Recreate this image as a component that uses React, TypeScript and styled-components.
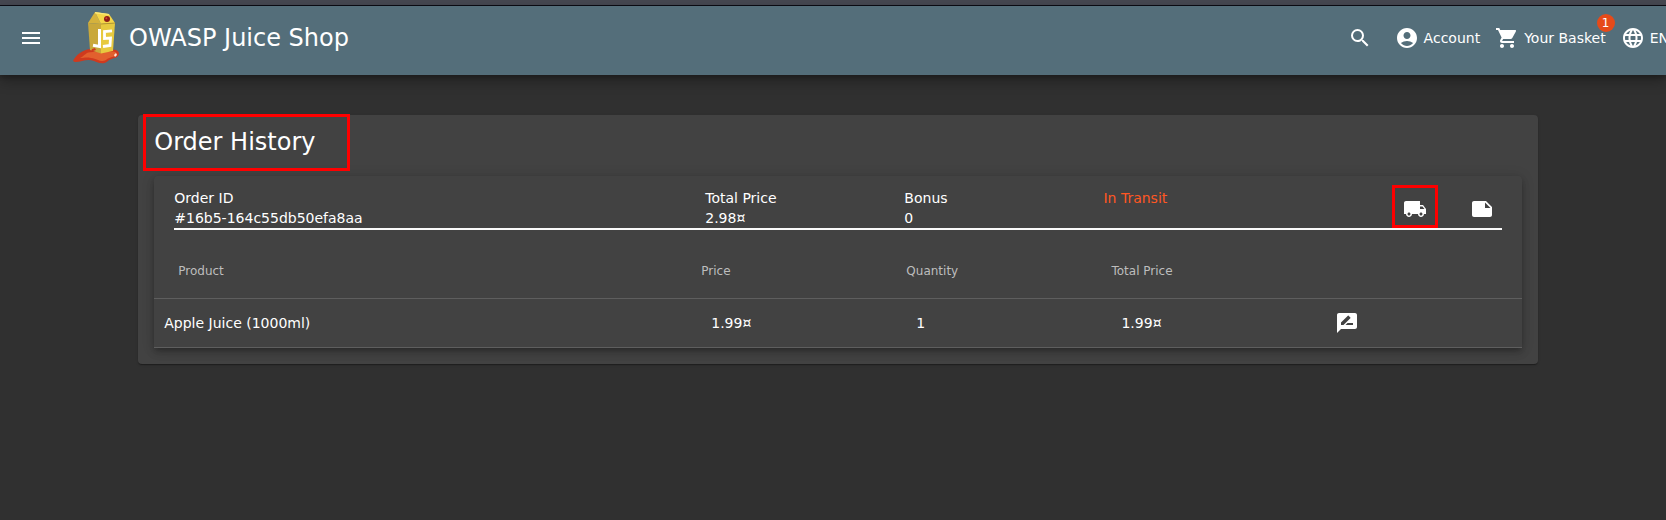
import React from "react";
import styled, { createGlobalStyle } from "styled-components";
import {
  MdMenu,
  MdSearch,
  MdAccountCircle,
  MdShoppingCart,
  MdLanguage,
  MdLocalShipping,
  MdNote,
  MdRateReview,
} from "react-icons/md";

const GlobalStyle = createGlobalStyle`
  *, *::before, *::after { box-sizing: border-box; }
  body {
    margin: 0;
    background: #303030;
    color: #fff;
    font-family: "DejaVu Sans", Verdana, sans-serif;
    font-size: 14px;
    line-height: 20px;
    overflow-x: hidden;
  }
`;

const Page = styled.div`
  min-height: 100vh;
  overflow: hidden;
`;

const WindowEdge = styled.div`
  height: 6px;
  background: #454750;
  border-bottom: 1px solid #0c0c14;
`;

const Toolbar = styled.header`
  display: flex;
  align-items: center;
  justify-content: space-between;
  height: 69px;
  padding: 0 0 6px 11px;
  background: #546e7a;
  box-shadow: 0 6px 12px rgba(0, 0, 0, 0.3), 0 2px 4px rgba(0, 0, 0, 0.2);
`;

const Brand = styled.div`
  display: flex;
  align-items: center;
`;

const IconButton = styled.button`
  display: inline-flex;
  align-items: center;
  justify-content: center;
  width: 40px;
  height: 40px;
  padding: 0;
  border: 0;
  background: none;
  color: inherit;
  cursor: pointer;
`;

const Home = styled.a`
  display: flex;
  align-items: center;
  gap: 9px;
  margin-left: 22px;
  color: inherit;
  font-size: 24px;
  line-height: 32px;
  text-decoration: none;
  white-space: nowrap;
`;

const Nav = styled.nav`
  display: flex;
  align-items: center;
  flex-shrink: 0;
  margin-right: -3px;
`;

const NavButton = styled.button`
  display: flex;
  align-items: center;
  gap: 5px;
  margin-left: 15px;
  padding: 0;
  border: 0;
  background: none;
  color: inherit;
  font: inherit;
  white-space: nowrap;
  cursor: pointer;
`;

const BasketLabel = styled.span`
  position: relative;
`;

const Badge = styled.span`
  position: absolute;
  top: -14px;
  right: -9px;
  width: 18px;
  height: 18px;
  border-radius: 50%;
  background: #e64a19;
  font-size: 12px;
  line-height: 18px;
  text-align: center;
`;

const Card = styled.main`
  width: 84%;
  margin: 40px auto 0 8.3%;
  padding: 11px 16px 16px;
  border-radius: 4px;
  background: #424242;
  box-shadow: 0 2px 1px -1px rgba(0, 0, 0, 0.2), 0 1px 1px rgba(0, 0, 0, 0.14),
    0 1px 3px rgba(0, 0, 0, 0.12);
`;

const Title = styled.h1`
  position: relative;
  width: max-content;
  margin: 0 0 18px;
  font-size: 24px;
  font-weight: 400;
  line-height: 32px;
`;

const TitleMark = styled.span`
  position: absolute;
  top: -12px;
  right: -35px;
  bottom: -13px;
  left: -11px;
  border: 3px solid #f00;
  pointer-events: none;
`;

const Order = styled.section`
  border-radius: 4px 4px 0 0;
  box-shadow: 0 3px 5px -1px rgba(0, 0, 0, 0.2), 0 5px 8px rgba(0, 0, 0, 0.14),
    0 1px 14px rgba(0, 0, 0, 0.12);
`;

const OrderHead = styled.div`
  display: grid;
  grid-template-columns: 40fr 15fr 15fr 15fr 10fr 5fr;
  margin: 0 20px;
  padding-top: 12px;
  border-bottom: 2px solid #fafafa;
`;

const Field = styled.div`
  display: flex;
  flex-direction: column;
  min-width: 0;
`;

const Status = styled.div`
  color: #ff5722;
`;

const Action = styled.div`
  display: flex;
  justify-content: flex-end;
  height: 40px;

  button {
    height: 42px;
  }
`;

const Marked = styled.div`
  position: relative;
  height: 40px;
`;

const ActionMark = styled.span`
  position: absolute;
  top: -3px;
  right: -3px;
  bottom: 0;
  left: -3px;
  border: 3px solid #f00;
  pointer-events: none;
`;

const Table = styled.table`
  width: 100%;
  margin-top: 13px;
  border-spacing: 0;
  table-layout: fixed;
`;

const HeadCell = styled.th<{ $width: number }>`
  width: ${(p) => p.$width}%;
  height: 56px;
  padding: 0;
  border-bottom: 1px solid #5e5e5e;
  color: #bdbdbd;
  font-size: 12px;
  font-weight: 400;
  text-align: left;

  &:first-child {
    padding-left: 24px;
  }
`;

const Cell = styled.td`
  height: 49px;
  padding: 0 10px;
  border-bottom: 1px solid #5e5e5e;

  button {
    vertical-align: middle;
  }
`;

const columns = [
  { label: "Product", width: 40 },
  { label: "Price", width: 15 },
  { label: "Quantity", width: 15 },
  { label: "Total Price", width: 15 },
  { label: "", width: 15 },
];

const products = [
  { name: "Apple Juice (1000ml)", price: "1.99¤", quantity: 1, total: "1.99¤" },
];

function JuiceLogo() {
  return (
    <svg width="47" height="52" viewBox="0 0 47 52" aria-hidden="true">
      <path
        d="M0 49 C3 43 9 38 17 37 L39 38 C46 37 47 42 45 44 C42 47 38 46 35 49 C31 53 25 51 21 49 C14 46 9 50 2 50 Z"
        fill="#cf3a1e"
      />
      <path
        d="M7 46 C13 43 12 40 20 40 L38 40 C43 38 45 42 42 44 C38 46 36 45 33 48 C28 51 25 47 18 46 C13 45 11 46 7 46Z"
        fill="#e2602e"
      />
      <path d="M41 43 L43 41 L44 43 L42 45Z" fill="#ffe7dc" />
      <path d="M15 11 L28 12 L28 41.500 L17 38 Z" fill="#c9a83b" />
      <path d="M28 12 L42 11 L40 39 L28 41.500 Z" fill="#e7c93f" />
      <path d="M22 0 L15 11 L28 12 Z" fill="#d5b23c" />
      <path d="M22 0 L36 2 L42 11 L28 12 Z" fill="#f5d547" />
      <path d="M22 0 L36 2 L36 3 L22 1.500 Z" fill="#fbe77b" />
      <path d="M28 12 L42 11" stroke="#ab8b28" strokeWidth="0.800" />
      <circle cx="34" cy="7" r="3" fill="#8e1c16" />
      <circle cx="33.300" cy="6.200" r="1" fill="#d8402e" />
      <path d="M26.500 17 V34.500 L20 33.200" fill="none" stroke="#fff" strokeWidth="3" />
      <path
        d="M39 18.800 L31.500 19.500 V26.500 L37.500 26 L37 33.500 L30 34.500"
        fill="none"
        stroke="#fff"
        strokeWidth="2.800"
      />
      <path d="M18 40 L19 37 L22 36 L23 38 L20 39Z" fill="#cf3a1e" />
    </svg>
  );
}

export default function App() {
  return (
    <Page>
      <GlobalStyle />
      <WindowEdge />
      <Toolbar>
        <Brand>
          <IconButton aria-label="Open menu">
            <MdMenu size={24} />
          </IconButton>
          <Home href="#home">
            <JuiceLogo />
            OWASP Juice Shop
          </Home>
        </Brand>
        <Nav>
          <IconButton aria-label="Search">
            <MdSearch size={24} />
          </IconButton>
          <NavButton>
            <MdAccountCircle size={24} />
            Account
          </NavButton>
          <NavButton>
            <MdShoppingCart size={24} />
            <BasketLabel>
              Your Basket
              <Badge>1</Badge>
            </BasketLabel>
          </NavButton>
          <NavButton>
            <MdLanguage size={24} />
            EN
          </NavButton>
        </Nav>
      </Toolbar>

      <Card>
        <Title>
          Order History
          <TitleMark />
        </Title>
        <Order>
          <OrderHead>
            <Field>
              <span>Order ID</span>
              <span>#16b5-164c55db50efa8aa</span>
            </Field>
            <Field>
              <span>Total Price</span>
              <span>2.98¤</span>
            </Field>
            <Field>
              <span>Bonus</span>
              <span>0</span>
            </Field>
            <Status>In Transit</Status>
            <Action>
              <Marked>
                <IconButton aria-label="Track order">
                  <MdLocalShipping size={24} />
                </IconButton>
                <ActionMark />
              </Marked>
            </Action>
            <Action>
              <IconButton aria-label="Print order confirmation">
                <MdNote size={24} />
              </IconButton>
            </Action>
          </OrderHead>
          <Table>
            <thead>
              <tr>
                {columns.map((c) => (
                  <HeadCell key={c.label + c.width} $width={c.width}>
                    {c.label}
                  </HeadCell>
                ))}
              </tr>
            </thead>
            <tbody>
              {products.map((p) => (
                <tr key={p.name}>
                  <Cell>{p.name}</Cell>
                  <Cell>{p.price}</Cell>
                  <Cell>{p.quantity}</Cell>
                  <Cell>{p.total}</Cell>
                  <Cell>
                    <IconButton aria-label={`Review ${p.name}`}>
                      <MdRateReview size={24} />
                    </IconButton>
                  </Cell>
                </tr>
              ))}
            </tbody>
          </Table>
        </Order>
      </Card>
    </Page>
  );
}
